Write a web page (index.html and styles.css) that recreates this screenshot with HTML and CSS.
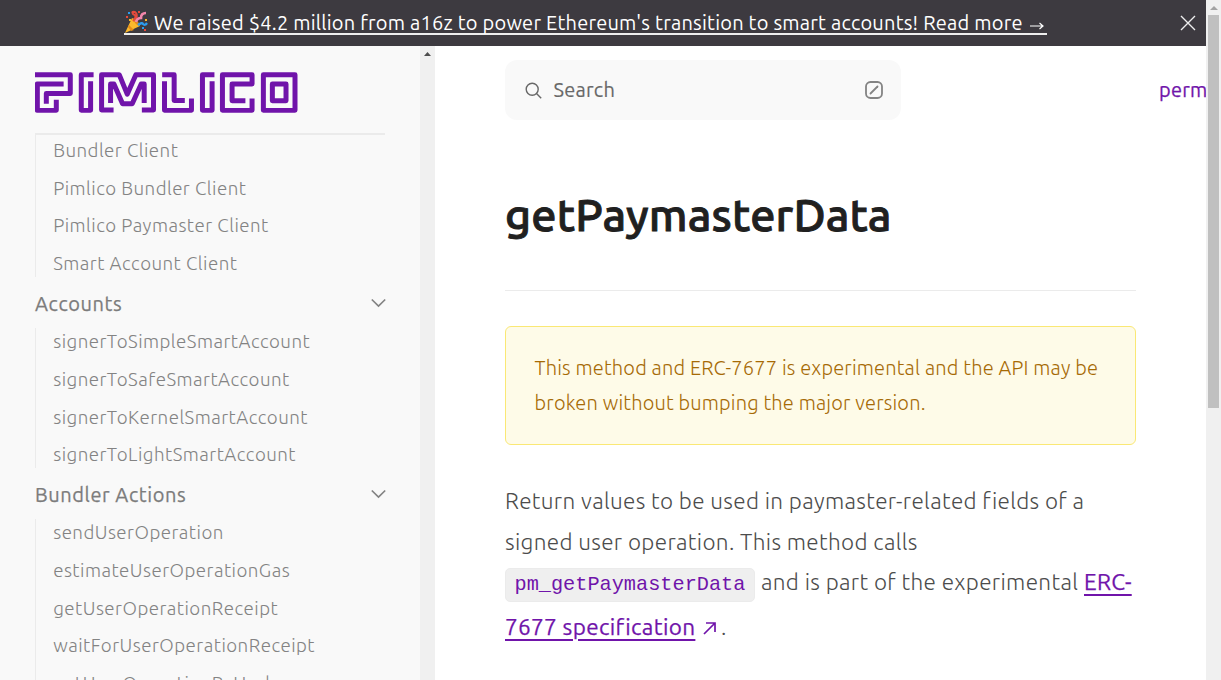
FILE: index.html
```
<!DOCTYPE html>
<html lang="en">
<head>
<meta charset="utf-8">
<title>getPaymasterData</title>
<link rel="stylesheet" href="styles.css">
</head>
<body>
<div class="window">
  <div class="page">
    <header class="banner">
      <a class="banner-link"><svg class="party" viewBox="0 0 24 24"><path d="M1 23 8 8Q14 10 16 16Z" fill="#fcb92c"/><path d="m5 15 5 5-3 1-3-4zM8 8q6 2 8 8-4 0-8-8" fill="#e58b18"/><path d="M9 11Q14 6 9 4 7 1 11 2q3 2 1 7" fill="none" stroke="#e64a3c" stroke-width="2"/><path d="M12 12q1-4 5-4 0-5 5-5" fill="none" stroke="#f386ab" stroke-width="2.6"/><path d="M14 15q4-3 5-1 2 2 4-1" fill="none" stroke="#2c9df0" stroke-width="2.3"/><path d="M2 6h2v2H2zM14 1h2v2h-2zM20 19h2v2h-2z" fill="#e64a3c"/><path d="M4 2h2v2H4zM18 17h2v2h-2z" fill="#2c9df0"/><path d="M5 9h2v2H5zM21 9h2v2h-2z" fill="#fcb92c"/></svg><span class="banner-text">We raised $4.2 million from a16z to power Ethereum's transition to smart accounts! Read more <svg class="long-arrow" viewBox="0 0 14 8"><path d="M0 4h13M9.5 1 13 4 9.500 7"/></svg></span></a>
      <svg class="close" viewBox="0 0 16 16"><path d="m1 1 14 14M15 1 1 15"/></svg>
    </header>
    <div class="columns">
      <aside class="sidebar">
        <div class="side-content">
          <div class="brand">
            <svg class="logo" viewBox="30 36 790 124" preserveAspectRatio="none">
              <path d="M30 44H136V101H64V132M116 72H37V152H94V120"/>
              <path d="M206 44H169V152H197V64"/>
              <path d="M266 151H230V44H283L307 103 333 44H386V151H351M257 130V72H267L293 132H322L349 72H358V130"/>
              <path d="M412 44H448V122H480M419 64V152H500V116"/>
              <path d="M569 44H533V152H562V64"/>
              <path d="M682 116V152H593V44H682V72H622V123H662"/>
              <path d="M716 44H811V152H716ZM743 72H784V123H743Z"/>
            </svg>
          </div>
          <nav>
            <ul class="items first">
              <li>Bundler Client</li><li>Pimlico Bundler Client</li><li>Pimlico Paymaster Client</li><li>Smart Account Client</li>
            </ul>
            <div class="section"><span>Accounts</span><svg class="chevron" viewBox="0 0 15 10"><path d="m.8 1.500 6.700 6.500 6.700-6.500"/></svg></div>
            <ul class="items">
              <li>signerToSimpleSmartAccount</li><li>signerToSafeSmartAccount</li><li>signerToKernelSmartAccount</li><li>signerToLightSmartAccount</li>
            </ul>
            <div class="section"><span>Bundler Actions</span><svg class="chevron" viewBox="0 0 15 10"><path d="m.8 1.500 6.700 6.500 6.700-6.500"/></svg></div>
            <ul class="items">
              <li>sendUserOperation</li><li>estimateUserOperationGas</li><li>getUserOperationReceipt</li><li>waitForUserOperationReceipt</li><li>getUserOperationByHash</li>
            </ul>
          </nav>
        </div>
        <div class="side-scroll"><svg viewBox="0 0 7 4"><path d="M0 4 3.500 0 7 4z"/></svg></div>
      </aside>
      <main class="main">
        <div class="topbar">
          <div class="search">
            <svg class="glass" viewBox="0 0 17 17"><circle cx="7.200" cy="7.200" r="6"/><path d="m11.500 11.500 4.700 4.700"/></svg>
            <span class="search-text">Search</span>
            <svg class="slash" viewBox="0 0 18 18"><rect x="1" y="1" width="16" height="16" rx="4.500"/><path d="m5.500 12.500 7-7"/></svg>
          </div>
          <span class="top-link">permissionless.js</span>
        </div>
        <article class="article">
          <h1>getPaymasterData</h1>
          <div class="callout">This method and ERC-7677 is experimental and the API may be<br>broken without bumping the major version.</div>
          <div class="para">
            <div class="line">Return values to be used in paymaster-related fields of a</div>
            <div class="line">signed user operation. This method calls</div>
            <div class="line p3"><code>pm_getPaymasterData</code><span class="mid">and is part of the experimental</span><a>ERC-</a></div>
            <div class="line p4"><a>7677 specification</a><svg class="ext" viewBox="0 0 13 13"><path d="M1 12 12 1M3 1h9v9"/></svg>.</div>
          </div>
        </article>
      </main>
    </div>
  </div>
  <div class="scrollbar"><svg viewBox="0 0 8 4"><path d="M0 4 4 0l4 4z"/></svg><div class="thumb"></div></div>
</div>
</body>
</html>
```

FILE: styles.css
```
* { box-sizing: border-box; }
body { margin: 0; overflow: hidden; font-family: Ubuntu, "Noto Sans", sans-serif; }
svg { flex: none; fill: none; }
.window { display: flex; width: 1221px; height: 680px; overflow: hidden; background: #fff; }
.page { width: 1206px; flex: none; overflow: hidden; }
.banner { height: 46px; background: #3d3a40; display: flex; align-items: center; padding: 0 10px 0 124px; justify-content: space-between; color: #fff; }
.banner-link { display: flex; align-items: center; height: 24px; width: 923px; border-bottom: 2px solid #eee; font-size: 20px; letter-spacing: .225px; white-space: nowrap; }
.party { width: 24px; height: 24px; margin-right: 6px; }
.long-arrow { width: 14px; height: 8px; stroke: #fff; stroke-width: 1.2; margin-left: 2px; }
.close { width: 16px; height: 16px; stroke: #eee; stroke-width: 1.4; }
.columns { display: flex; height: 634px; }
.sidebar { display: flex; width: 435px; flex: none; background: #f9f9f9; overflow: hidden; }
.side-content { width: 420px; padding: 0 35px; }
.brand { height: 89px; padding-top: 26px; border-bottom: 2px solid #ebebeb; }
.logo { display: block; width: 263px; height: 41px; stroke: #7014aa; stroke-width: 15; stroke-linejoin: round; }
.items { display: flow-root; list-style: none; margin: 0; padding: 0 0 0 17.200px; border-left: 1px solid #ebebeb; color: #838383; height: 140px; font-size: 18.750px; letter-spacing: .46px; font-weight: 300; line-height: 37.700px; }
.items li { white-space: nowrap; }
.items li:first-child { margin-top: -4.800px; }
.items.first { height: 142px; }
.items.first li:first-child { margin-top: -3px; }
.items:last-child { height: 200px; }
.section { height: 51px; display: flex; align-items: center; justify-content: space-between; font-size: 20px; color: #7c7c7c; padding-top: 1px; margin-right: -.5px; font-weight: 400; letter-spacing: .58px; -webkit-text-stroke: .25px; }
.chevron { width: 15px; height: 10px; stroke: #838383; stroke-width: 1.700; }
.side-scroll { width: 15px; background: #f0f0f0; padding: 6px 4px; }
.side-scroll svg { width: 7px; height: 4px; fill: #4d4d4d; display: block; }
.main { width: 771px; padding: 14px 0 0 70px; flex: none; overflow: hidden; }
.topbar { display: flex; align-items: center; height: 60px; white-space: nowrap; font-size: 20px; }
.search { display: flex; align-items: center; width: 396px; height: 60px; padding: 0 18px 0 20px; border-radius: 12px; background: #f9f9f9; color: #686868; flex: none; }
.glass { width: 17px; height: 17px; stroke: #686868; stroke-width: 1.400; margin-right: 11.500px; }
.search-text { padding-bottom: 2px; letter-spacing: .25px; -webkit-text-stroke: .15px; }
.slash { width: 18px; height: 18px; margin-left: auto; stroke: #838383; stroke-width: 1.800; stroke-linecap: round; }
.top-link { margin-left: 258px; padding-bottom: 2px; color: #7014aa; letter-spacing: .2px; -webkit-text-stroke: .25px; }
.article { width: 631px; }
h1 { margin: 59px 0 0; height: 112px; border-bottom: 1px solid #ebebeb; padding-top: 6px; font-size: 45px; line-height: 60px; font-weight: 500; letter-spacing: .12px; -webkit-text-stroke: .9px; color: #202020; }
.callout { margin-top: 35px; height: 119px; border: 1px solid #fae875; border-radius: 6px; background: #fefbe8; padding: 23px 28.600px; font-size: 20px; line-height: 35px; letter-spacing: .18px; font-weight: 300; color: #a66a05; white-space: nowrap; }
.para { margin-top: 35px; font-size: 22.500px; font-weight: 300; letter-spacing: .335px; color: #4c4c4c; }
.line { white-space: nowrap; height: 41px; line-height: 41px; display: flex; align-items: center; }
.p3 { height: 39px; }
.p4 { height: 50px; }
.para a { color: #7014aa; font-weight: 400; -webkit-text-stroke: .25px; text-decoration: underline; text-decoration-thickness: 2px; text-underline-offset: 4px; }
code { font: 20.250px/32px "Liberation Mono", monospace; letter-spacing: 0; color: #7014aa; background: #efefef; border: 1px solid #ebebeb; border-radius: 5px; height: 34px; width: 250px; padding: 0 8.500px; margin: 6.500px 6px 0 0; }
.mid { width: 323px; }
.ext { width: 13px; height: 13px; stroke: #7014aa; stroke-width: 1.700; margin: 4px 5px 0 7.500px; }
.scrollbar { width: 15px; background: #f0f0f0; padding: 6px 2px; }
.scrollbar svg { display: block; width: 8px; height: 4px; fill: #a3a3a3; margin-left: 2px; }
.thumb { width: 11px; height: 393px; margin-top: 5px; background: #c0c0c0; }
```
